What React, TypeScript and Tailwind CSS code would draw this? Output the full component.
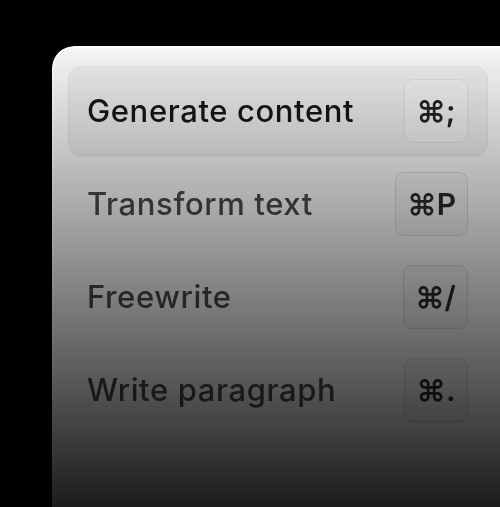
const items = [
  { label: 'Generate content', keys: '⌘;', active: true },
  { label: 'Transform text', keys: '⌘P', active: false },
  { label: 'Freewrite', keys: '⌘/', active: false },
  { label: 'Write paragraph', keys: '⌘.', active: false },
];

export default function App() {
  return (
    <div className="h-[507px] w-[500px] overflow-hidden bg-black pl-[52px] pt-[46px] font-['Inter',sans-serif]">
      <div className="h-[520px] w-[450px] rounded-tl-[22px] border-l-2 border-t-2 border-[#ffffff] bg-[#f6f6f6] px-[14px] pt-[18px] [mask-image:linear-gradient(to_bottom,black,transparent_100%)]">
        <ul className="flex flex-col gap-[3px]">
          {items.map((item) => (
            <li
              key={item.label}
              className={
                item.active
                  ? 'flex h-[90px] items-center justify-between rounded-[14px] border border-[#e4e4e4] bg-[#ebebeb] pl-[18px] pr-[19px] shadow-[0_1px_2px_rgba(0,0,0,0.04)]'
                  : 'flex h-[90px] items-center justify-between rounded-[14px] border border-transparent pl-[18px] pr-[19px]'
              }
            >
              <span
                className={
                  item.active
                    ? 'text-[31px] font-medium tracking-[0.02em] text-[#161616]'
                    : 'text-[31px] font-medium tracking-[0.02em] text-[#4a4a4a]'
                }
              >
                {item.label}
              </span>
              <kbd
                className={
                  item.active
                    ? 'flex h-[64px] min-w-[64px] items-center justify-center rounded-[9px] border border-[#dedede] bg-[#efefef] px-[11px] font-["Inter",sans-serif] text-[30px] font-semibold text-[#222222]'
                    : 'flex h-[64px] min-w-[64px] items-center justify-center rounded-[9px] border border-[#d6d6d6] bg-[#f0f0f0] px-[11px] font-["Inter",sans-serif] text-[30px] font-semibold text-[#2a2a2a]'
                }
              >
                {item.keys}
              </kbd>
            </li>
          ))}
        </ul>
      </div>
    </div>
  );
}
